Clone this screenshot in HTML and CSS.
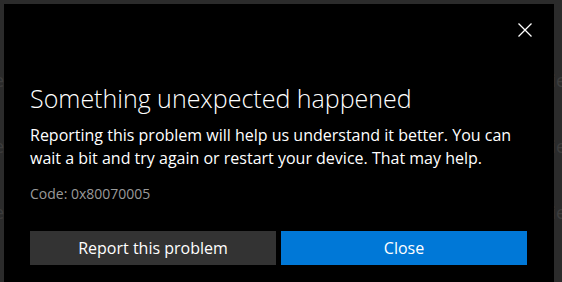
FILE: index.html
```html
<!DOCTYPE html>
<html>
<head>
<meta charset="utf-8">
<link rel="stylesheet" href="styles.css">
</head>
<body>
<div class="backdrop">
  <div class="bg-row"><span class="bg-left">e</span><span class="bg-right">ie</span></div>
  <div class="bg-row"><span class="bg-left">e</span><span class="bg-right">ie</span></div>
  <div class="bg-row"><span class="bg-left">e</span><span class="bg-right">ie</span></div>
</div>
<div class="dialog">
  <div class="topbar">
    <button class="close-x" aria-label="Close">
      <svg width="14" height="14" viewBox="0 0 14 14"><path d="M0.5 0.5L13.5 13.5M13.5 0.5L0.5 13.5" stroke="#fff" stroke-width="1.3" fill="none"/></svg>
    </button>
  </div>
  <div class="content">
    <h1 class="title">Something unexpected happened</h1>
    <p class="message">Reporting this problem will help us understand it better. You can wait a bit and try again or restart your device. That may help.</p>
    <p class="code">Code: 0x80070005</p>
    <div class="actions">
      <button class="btn btn-secondary">Report this problem</button>
      <button class="btn btn-primary">Close</button>
    </div>
  </div>
</div>
</body>
</html>
```
FILE: styles.css
```css
html, body {
  margin: 0;
  padding: 0;
  width: 562px;
  height: 282px;
  overflow: hidden;
  background: #2b2b2b;
  font-family: "Open Sans", "Noto Sans", sans-serif;
}
.backdrop {
  padding-top: 70px;
  display: flex;
  flex-direction: column;
  gap: 46px;
}
.bg-row {
  display: flex;
  justify-content: space-between;
  height: 20px;
  font-size: 18px;
  line-height: 20px;
  color: #3d3d3d;
}
.bg-left { margin-left: -6px; }
.bg-right { margin-right: -4px; }
.dialog {
  position: absolute;
  left: 4px;
  top: 4px;
  width: 550px;
  height: 290px;
  background: #000;
  color: #fff;
}
.topbar {
  display: flex;
  justify-content: flex-end;
  padding: 19px 22px 0 0;
  height: 14px;
}
.close-x {
  background: none;
  border: 0;
  padding: 0;
  width: 14px;
  height: 14px;
  display: block;
}
.close-x svg { display: block; }
.content {
  padding: 0 27px 0 26px;
}
.title {
  margin: 44px 0 0;
  font-size: 25px;
  font-weight: 300;
  line-height: 34px;
  letter-spacing: 0;
}
.message {
  margin: 9px 0 0;
  font-size: 16px;
  line-height: 23px;
}
.code {
  margin: 14px 0 0;
  font-size: 14px;
  line-height: 19px;
  color: #9a9a9a;
}
.actions {
  display: flex;
  gap: 5px;
  margin-top: 28px;
}
.btn {
  flex: 1;
  height: 34px;
  border: 0;
  padding: 0;
  font-family: inherit;
  font-size: 16px;
  color: #fff;
}
.btn-secondary { background: #333333; }
.btn-primary { background: #0078d7; }
```
